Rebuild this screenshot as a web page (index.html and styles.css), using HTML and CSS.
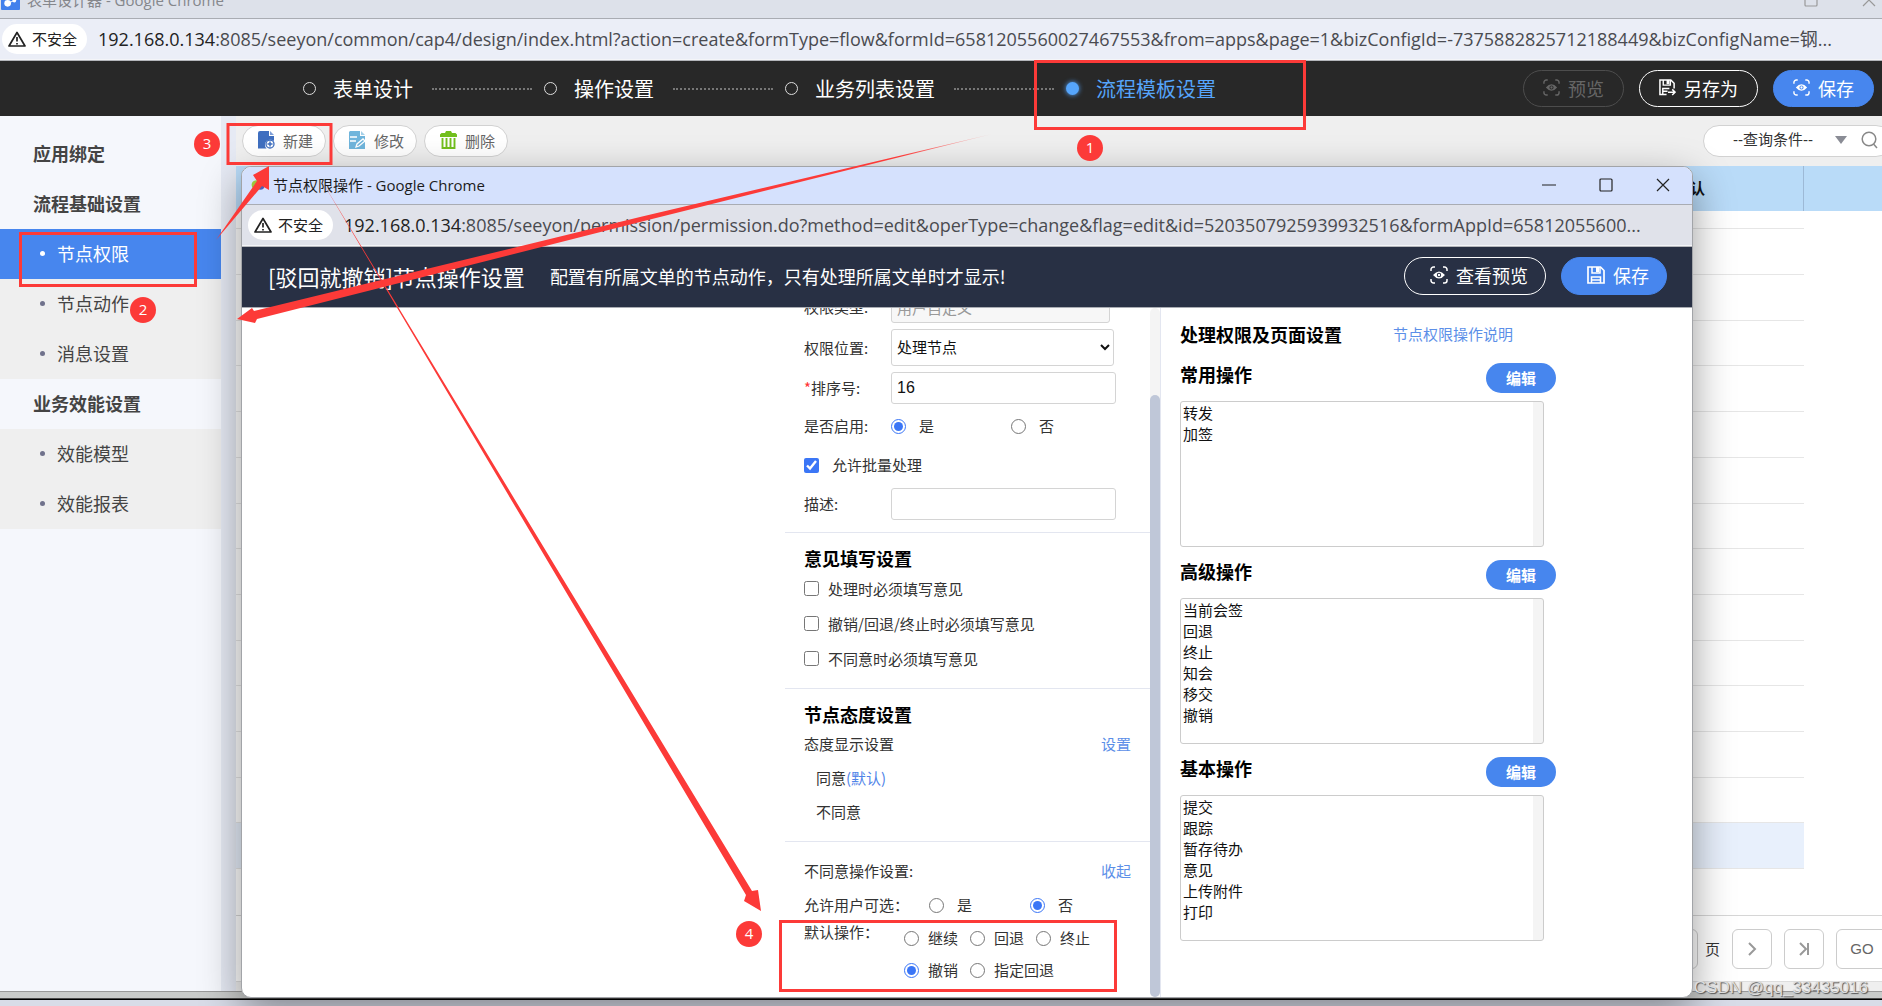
FILE: index.html
```html
<!DOCTYPE html>
<html lang="zh-CN">
<head>
  <meta charset="UTF-8" />
  <meta name="viewport" content="width=device-width, initial-scale=1.0" />
  <title>表单设计器</title>
  <link rel="stylesheet" href="styles.css">
</head>
<body>
  <!-- shared icons -->
  <svg class="defs" aria-hidden="true">
    <symbol id="i-warn" viewBox="0 0 18 16">
      <path d="M9 1.5 17 15H1z" fill="none" stroke="#222" stroke-width="1.7" stroke-linejoin="round"/>
      <path d="M9 6v4.6M9 12v1.6" stroke="#222" stroke-width="1.7"/>
    </symbol>
    <symbol id="i-eye" viewBox="0 0 18 18">
      <path d="M1 5V3.500A2.500 2.500 0 0 1 3.500 1H5M13 1h1.500A2.500 2.500 0 0 1 17 3.500V5M17 13v1.500a2.500 2.500 0 0 1-2.500 2.500H13M5 17H3.500A2.500 2.500 0 0 1 1 14.500V13" fill="none" stroke="currentColor" stroke-width="1.500"/>
      <path d="M3 9Q9 2 15 9 9 16 3 9zM9 6.800a2.200 2.200 0 1 0 0 4.400 2.200 2.200 0 0 0 0-4.400z" fill="currentColor" fill-rule="evenodd"/>
      <circle cx="9" cy="9" r="1.200" fill="currentColor"/>
    </symbol>
    <symbol id="i-save" viewBox="0 0 18 18">
      <path d="M1 1h12.500L17 4.500V17H1z" fill="none" stroke="currentColor" stroke-width="1.700"/>
      <path d="M5 1v6h8V1M4.500 17v-6h9v6M4.500 14h9" fill="none" stroke="currentColor" stroke-width="1.500"/>
      <path d="M9 1h3v5H9z" fill="currentColor"/>
    </symbol>
    <symbol id="i-saveas" viewBox="0 0 18 18">
      <path d="M8 16.500H1V1h11.500L16 4.500V10" fill="none" stroke="currentColor" stroke-width="1.600"/>
      <path d="M4.500 1v5.500h7.500V1M4 16v-6h7M4 13h5" fill="none" stroke="currentColor" stroke-width="1.500"/>
      <path d="M8 1h3v4.500H8z" fill="currentColor"/>
      <path d="M9.500 14h7M14 11l3 3-3 3" fill="none" stroke="currentColor" stroke-width="1.600"/>
    </symbol>
  </svg>

  <div class="window">
    <header class="titlebar titlebar-main">
      <svg class="app-icon" viewBox="0 0 20 20"><rect width="20" height="20" rx="1" fill="#4280ec"/><circle cx="7" cy="13" r="3.500" fill="#fff"/><circle cx="14" cy="10" r="2" fill="#fff"/><path d="M7 13l7-3" stroke="#fff"/></svg>
      <span class="title">表单设计器 - Google Chrome</span>
      <span class="win-ctl">
        <svg width="14" height="14" viewBox="0 0 14 14"><rect x="1" y="1" width="12" height="12" rx="1"/></svg>
        <svg width="14" height="14" viewBox="0 0 14 14"><path d="M1 1l12 12M13 1L1 13"/></svg>
      </span>
    </header>
    <div class="addr">
      <span class="unsafe"><svg width="18" height="16"><use href="#i-warn"/></svg>不安全</span>
      <span class="url"><b>192.168.0.134</b>:8085/seeyon/common/cap4/design/index.html?action=create&amp;formType=flow&amp;formId=6581205560027467553&amp;from=apps&amp;page=1&amp;bizConfigId=-7375882825712188449&amp;bizConfigName=钢...</span>
    </div>

    <nav class="steps">
      <ol>
        <li><i></i>表单设计</li>
        <li><i></i>操作设置</li>
        <li><i></i>业务列表设置</li>
        <li class="on"><i></i>流程模板设置</li>
      </ol>
      <div class="step-btns">
        <button class="pill ghost" disabled><svg width="17" height="17"><use href="#i-eye"/></svg>预览</button>
        <button class="pill line"><svg width="17" height="17"><use href="#i-saveas"/></svg>另存为</button>
        <button class="pill blue"><svg width="17" height="17"><use href="#i-eye"/></svg>保存</button>
      </div>
    </nav>

    <div class="main">
      <aside class="side">
        <h3>应用绑定</h3>
        <h3>流程基础设置</h3>
        <ul>
          <li><a class="on" href="#">节点权限</a></li>
          <li><a href="#">节点动作</a></li>
          <li><a href="#">消息设置</a></li>
        </ul>
        <h3>业务效能设置</h3>
        <ul>
          <li><a href="#">效能模型</a></li>
          <li><a href="#">效能报表</a></li>
        </ul>
      </aside>

      <section class="content">
        <div class="toolbar">
          <button class="tool"><svg width="17" height="18" viewBox="0 0 17 18"><path d="M2 0h9v5h5v5a5 5 0 0 0-7.500 7.500H0V2a2 2 0 0 1 2-2z" fill="#3f6fc0"/><path d="M12 0l4 4h-4z" fill="#7f9fd8"/><circle cx="12" cy="13" r="4" fill="#fff" stroke="#3f6fc0" stroke-width="1.300"/><path d="M12 10.500v5M9.500 13h5" stroke="#3f6fc0" stroke-width="1.500"/></svg>新建</button>
          <button class="tool"><svg width="17" height="18" viewBox="0 0 17 18"><path d="M1 0h10v5h5v13H0V1z" fill="#70b5dc"/><path d="M12 0l4 4h-4z" fill="#a5d0e8"/><path d="M1 6h7M1 10h6" stroke="#fff" stroke-width="1.500"/><path d="M7 16l1-3 6-5 2 2-6 5z" fill="#70b5dc" stroke="#fff" stroke-width="1.300"/></svg>修改</button>
          <button class="tool"><svg width="17" height="18" viewBox="0 0 17 18"><path d="M0 6V3.500L1.500 2H5l1-2h5l1 2h3.500L17 3.500V6z" fill="#72bf1e"/><path d="M2.500 7v10h12V7M6.500 7v10M10.500 7v10" fill="none" stroke="#72bf1e" stroke-width="1.900"/></svg>删除</button>
          <div class="search">
            <span>--查询条件--</span>
            <i class="caret"></i>
            <svg width="17" height="18" viewBox="0 0 17 18"><circle cx="8" cy="8" r="6.800"/><path d="M12.500 13l3.500 4"/></svg>
          </div>
        </div>
        <table class="list">
          <thead><tr><th></th><th class="def">是否默认</th><th class="last"></th></tr></thead>
          <tbody>
            <tr class="cut"><td colspan="2"></td><td></td></tr>
            <tr><td colspan="2"></td><td></td></tr>
            <tr><td colspan="2"></td><td></td></tr>
            <tr><td colspan="2"></td><td></td></tr>
            <tr><td colspan="2"></td><td></td></tr>
            <tr><td colspan="2"></td><td></td></tr>
            <tr><td colspan="2"></td><td></td></tr>
            <tr><td colspan="2"></td><td></td></tr>
            <tr><td colspan="2"></td><td></td></tr>
            <tr><td colspan="2"></td><td></td></tr>
            <tr><td colspan="2"></td><td></td></tr>
            <tr><td colspan="2"></td><td></td></tr>
            <tr><td colspan="2"></td><td></td></tr>
            <tr><td colspan="2"></td><td></td></tr>
            <tr class="picked"><td colspan="2"></td><td></td></tr>
            <tr class="end"><td colspan="2"></td><td></td></tr>
          </tbody>
        </table>
        <div class="pager">
          <input type="text" aria-label="页码">
          <span>页</span>
          <button aria-label="下一页"><svg width="16" height="16" viewBox="0 0 16 16"><path d="M5 2l6 6-6 6"/></svg></button>
          <button aria-label="末页"><svg width="16" height="16" viewBox="0 0 16 16"><path d="M4 2l6 6-6 6M12 2v12"/></svg></button>
          <button class="go">GO</button>
        </div>
      </section>
    </div>
  </div>
  <div class="desk"></div>

  <div class="popup">
    <header class="titlebar">
      <svg class="app-icon" viewBox="0 0 20 20"><circle cx="8" cy="10" r="6" fill="#9bc53d"/><circle cx="13" cy="11" r="5" fill="#4a62b8"/></svg>
      <span class="title">节点权限操作 - Google Chrome</span>
      <span class="win-ctl">
        <svg width="14" height="14" viewBox="0 0 14 14"><path d="M0 7h14"/></svg>
        <svg width="14" height="14" viewBox="0 0 14 14"><rect x="1" y="1" width="12" height="12" rx="1"/></svg>
        <svg width="14" height="14" viewBox="0 0 14 14"><path d="M1 1l12 12M13 1L1 13"/></svg>
      </span>
    </header>
    <div class="addr">
      <span class="unsafe"><svg width="18" height="16"><use href="#i-warn"/></svg>不安全</span>
      <span class="url"><b>192.168.0.134</b>:8085/seeyon/permission/permission.do?method=edit&amp;operType=change&amp;flag=edit&amp;id=5203507925939932516&amp;formAppId=65812055600...</span>
    </div>
    <div class="pop-head">
      <h1>[驳回就撤销]节点操作设置</h1>
      <p>配置有所属文单的节点动作，只有处理所属文单时才显示!</p>
      <button class="pill line"><svg width="18" height="18"><use href="#i-eye"/></svg>查看预览</button>
      <button class="pill blue"><svg width="18" height="18"><use href="#i-save"/></svg>保存</button>
    </div>

    <div class="pop-body">
      <form class="form">
        <div class="sec sec-base">
          <div class="row"><label for="ptype">权限类型:</label><input id="ptype" type="text" value="用户自定义" disabled></div>
          <div class="row"><label for="ppos">权限位置:</label><select id="ppos"><option>处理节点</option></select></div>
          <div class="row"><label for="psort"><em>*</em>排序号:</label><input id="psort" type="text" value="16"></div>
          <div class="row">
            <span class="lab">是否启用:</span>
            <label class="opt wide"><input type="radio" name="enable" checked>是</label>
            <label class="opt wide"><input type="radio" name="enable">否</label>
          </div>
          <div class="row batch"><label class="opt"><input type="checkbox" checked>允许批量处理</label></div>
          <div class="row"><label for="pdesc">描述:</label><input id="pdesc" type="text"></div>
        </div>
        <div class="sec">
          <h2>意见填写设置</h2>
          <div class="row check"><label class="opt"><input type="checkbox">处理时必须填写意见</label></div>
          <div class="row check"><label class="opt"><input type="checkbox">撤销/回退/终止时必须填写意见</label></div>
          <div class="row check"><label class="opt"><input type="checkbox">不同意时必须填写意见</label></div>
        </div>
        <div class="sec">
          <h2>节点态度设置</h2>
          <div class="row text">态度显示设置<a href="#">设置</a></div>
          <div class="row text sub">同意<span class="hint">(默认)</span></div>
          <div class="row text sub">不同意</div>
        </div>
        <div class="sec sec-deny">
          <div class="row text">不同意操作设置:<a href="#">收起</a></div>
          <div class="row text allow">
            <span class="lab">允许用户可选：</span>
            <label class="opt"><input type="radio" name="allow">是</label>
            <label class="opt"><input type="radio" name="allow" checked>否</label>
          </div>
          <div class="ops">
            <span class="lab">默认操作：</span>
            <div class="ops-grid">
              <label class="opt"><input type="radio" name="op">继续</label>
              <label class="opt"><input type="radio" name="op">回退</label>
              <label class="opt"><input type="radio" name="op">终止</label>
              <label class="opt"><input type="radio" name="op" checked>撤销</label>
              <label class="opt two"><input type="radio" name="op">指定回退</label>
            </div>
          </div>
        </div>
      </form>
      <div class="scroll"><i></i></div>

      <div class="perm">
        <div class="perm-title"><h2>处理权限及页面设置</h2><a href="#">节点权限操作说明</a></div>
        <div class="perm-box">
          <div class="perm-head"><h2><label for="l1">常用操作</label></h2><button type="button">编辑</button></div>
          <select id="l1" multiple><option>转发</option><option>加签</option></select>
        </div>
        <div class="perm-box">
          <div class="perm-head"><h2><label for="l2">高级操作</label></h2><button type="button">编辑</button></div>
          <select id="l2" multiple><option>当前会签</option><option>回退</option><option>终止</option><option>知会</option><option>移交</option><option>撤销</option></select>
        </div>
        <div class="perm-box">
          <div class="perm-head"><h2><label for="l3">基本操作</label></h2><button type="button">编辑</button></div>
          <select id="l3" multiple><option>提交</option><option>跟踪</option><option>暂存待办</option><option>意见</option><option>上传附件</option><option>打印</option></select>
        </div>
      </div>
    </div>
  </div>

  <!-- step marks over the windows -->
  <svg class="marks" width="1882" height="1006" viewBox="0 0 1882 1006">
    <defs>
      <linearGradient id="fade" gradientUnits="userSpaceOnUse" x1="992" y1="134" x2="900" y2="158">
        <stop offset="0" stop-color="#fc3a38" stop-opacity="0.200"/><stop offset="1" stop-color="#fc3a38"/>
      </linearGradient>
    </defs>
    <g fill="none" stroke="#fc3a38" stroke-width="3">
      <rect x="1035.500" y="61.500" width="269" height="67"/>
      <rect x="228" y="124.500" width="103" height="39"/>
      <rect x="20.500" y="233.500" width="175" height="52"/>
      <rect x="780.500" y="921.500" width="335" height="69"/>
    </g>
    <path d="M992 134L640 222 257 319 255 323 237 319 252 308 254 311 640 217z" fill="url(#fade)"/>
    <path d="M216 240L257 181 253 175 269 166 269 190 262 186z" fill="#fc3a38"/>
    <path d="M320 178L752 891 758 890 761 911 744 901 746 895z" fill="#fc3a38"/>
    <g fill="#fc3a38"><circle cx="1090" cy="148" r="13"/><circle cx="143" cy="310" r="13"/><circle cx="207" cy="144" r="13"/><circle cx="749" cy="934" r="13"/></g>
    <g class="nums"><text x="1090" y="153">1</text><text x="143" y="315">2</text><text x="207" y="149">3</text><text x="749" y="939">4</text></g>
  </svg>
  <div class="watermark">CSDN @qq_33435016</div>
</body>
</html>
```
FILE: styles.css
```css
* { box-sizing: border-box; }

body {
  margin: 0;
  height: 100vh;
  display: flex;
  flex-direction: column;
  position: relative;
  overflow: hidden;
  font-family: "Noto Sans CJK SC", sans-serif;
  font-size: 15px;
  line-height: 20px;
  color: #333;
  background: #d8dce8;
}
h1, h2, h3, p, ul, ol { margin: 0; padding: 0; }
li { list-style: none; }
a { text-decoration: none; color: #5c8fe8; }
button, input, select { font-family: inherit; font-size: 15px; }
svg { flex: none; }
.defs { position: absolute; width: 0; height: 0; }

/* browser frame */
.window {
  flex: 1;
  min-height: 0;
  display: flex;
  flex-direction: column;
  background: #fff;
  border-bottom: 1px solid #999;
}
.desk {
  height: 14px;
  background: linear-gradient(#c9cbca 6px, #999 6px, #000 7px, #000 8px, #d8dce8 8px);
}
.titlebar {
  display: flex;
  align-items: center;
  height: 38px;
  padding: 0 22px 1px 8px;
  background: #d5e1fd;
  border-bottom: 1px solid #a9acb3;
  color: #1c1c1c;
}
.titlebar .app-icon { width: 16px; height: 16px; margin-right: 7px; }
.title { flex: 1; font-family: "Open Sans", "Noto Sans CJK SC", sans-serif; }
.win-ctl { display: flex; gap: 43px; }
.win-ctl svg { fill: none; stroke: #222; stroke-width: 1.2; }
.titlebar-main {
  height: 19px;
  align-items: flex-end;
  padding: 0 6px 8px 1px;
  background: #dde1ea;
  color: #85878c;
}
.titlebar-main .app-icon { width: 19px; height: 19px; }
.titlebar-main .win-ctl svg { stroke: #999; }
.titlebar-main .win-ctl { padding-bottom: 3px; gap: 44px; }
.addr {
  display: flex;
  align-items: center;
  gap: 11px;
  height: 42px;
  padding: 0 6px 1px 2px;
  background: #ebeef7;
  border-bottom: 1px solid #b4b6bb;
  box-shadow: inset 0 -1px #f4f5f8;
}
.unsafe {
  display: flex;
  align-items: center;
  gap: 6px;
  height: 30px;
  padding: 0 10px 0 6px;
  border-radius: 15px;
  background: #fff;
  color: #222;
  white-space: nowrap;
}
.url {
  flex: 1;
  overflow: hidden;
  white-space: nowrap;
  font-family: "Open Sans", "Noto Sans CJK SC", sans-serif;
  font-size: 18px;
  line-height: 26px;
  color: #4a4b50;
}
.url b { font-weight: normal; color: #222; }

/* wizard steps */
.steps {
  display: flex;
  align-items: center;
  justify-content: space-between;
  height: 55px;
  padding: 0 8px 0 303px;
  background: #282828;
  color: #fff;
}
.steps ol { display: flex; }
.steps li { display: flex; align-items: center; font-size: 20px; line-height: 28px; white-space: nowrap; }
.steps li i { width: 13px; height: 13px; margin-right: 17px; border: 1px solid #ddd; border-radius: 50%; }
.steps li:not(:last-child)::after { content: ""; width: 100px; margin: 0 12px 0 19px; border-top: 2px dotted #777; }
.steps li.on { color: #56a5fb; }
.steps li.on i { border: 0; background: #56a5fb; box-shadow: 0 0 5px #56a5fb; }
.step-btns { display: flex; gap: 15px; }
.pill {
  display: flex;
  align-items: center;
  justify-content: center;
  gap: 8px;
  height: 37px;
  padding: 0 19px 2px;
  border: 1px solid #fff;
  border-radius: 19px;
  background: none;
  color: #fff;
  font-size: 18px;
  line-height: 24px;
  white-space: nowrap;
}
.pill.ghost { border-color: #4d4d4d; color: #666; }
.pill.blue { background: #4786ee; border-color: #4786ee; }

/* left menu */
.main { flex: 1; display: flex; min-height: 0; }
.side { width: 221px; padding-top: 13px; background: #f5f7fc; font-size: 18px; }
.side h3 { padding: 0 0 2px 33px; font-size: 18px; line-height: 48px; color: #444; }
.side ul { background: #efefef; }
.side li a { display: flex; align-items: center; height: 50px; padding: 0 0 2px 40px; color: #444; }
.side li a::before { content: ""; width: 5px; height: 5px; margin-right: 12px; border-radius: 50%; background: #70728c; }
.side li a.on { background: #4786ee; color: #fff; }
.side li a.on::before { background: #fff; }

.content { flex: 1; display: flex; flex-direction: column; border-left: 15px solid #e6eaf4; }
.toolbar {
  display: flex;
  align-items: center;
  gap: 7px;
  height: 50px;
  padding-left: 6px;
  background: #efefef;
}
.tool {
  display: flex;
  align-items: center;
  gap: 8px;
  height: 32px;
  padding: 0 12px 2px 15px;
  border: 1px solid #d2d2d2;
  border-radius: 16px;
  background: #fff;
  color: #666;
}
.search {
  display: flex;
  align-items: center;
  gap: 14px;
  height: 32px;
  margin-left: auto;
  margin-right: -10px;
  padding: 0 13px 2px 29px;
  border: 1px solid #d2d2d2;
  border-radius: 16px;
  background: #fff;
}
.search span { margin-right: 8px; font-family: "Liberation Sans", "Noto Sans CJK SC", sans-serif; }
.search svg { fill: none; stroke: #888; stroke-width: 1.5; }
.caret { border: 6px solid transparent; border-top: 8px solid #8a8c95; border-bottom: 0; }

.list { flex: 1; border-collapse: separate; border-spacing: 0; table-layout: fixed; width: 100%; }
.list th { height: 45px; padding: 0 8px 2px; background: #b9dbf8; border-right: 1px solid #9db9d6; text-align: left; color: #111; }
.list th.def { width: 167px; }
.list th.last { width: 78px; border-right: 0; }
.list td { height: 45px; padding: 0; }
.list td:first-child { border-bottom: 1px solid #e6e6e6; }
.list .cut td { height: 18px; }
.list .picked td:first-child { background: #e8f0fc; }
.list .end td { border-bottom: 0; }
.pager {
  display: flex;
  align-items: center;
  justify-content: flex-end;
  gap: 12px;
  height: 76px;
  padding-bottom: 10px;
  border-top: 1px solid #d6d6d6;
  background: linear-gradient(#fff 65px, #ccc 65px, #efefef 66px);
}
.pager button, .pager input { width: 40px; height: 40px; padding: 0; border: 1px solid #ccc; border-radius: 6px; background: #fff; }
.pager button { display: flex; align-items: center; justify-content: center; color: #666; }
.pager input { margin-right: -5px; }
.pager svg { fill: none; stroke: #999; stroke-width: 2; }
.pager .go { width: 52px; margin-right: -6px; font-family: "Liberation Sans", sans-serif; }

/* popup window */
.popup {
  position: absolute;
  top: 166px;
  right: 189px;
  bottom: 8px;
  left: 241px;
  display: flex;
  flex-direction: column;
  overflow: hidden;
  border: 1px solid #a2a4a8;
  border-radius: 10px;
  background: #fff;
  box-shadow: 0 14px 40px rgba(0, 0, 0, 0.4);
}
.popup .addr { padding-left: 6px; background: #e0e2ea; }
.pop-head {
  display: flex;
  align-items: center;
  height: 61px;
  padding: 0 25px 2px 26px;
  background: #283044;
  border-bottom: 1px solid #a9acb3;
  color: #fff;
  white-space: nowrap;
}
.pop-head h1 { font-size: 22px; font-weight: normal; line-height: 30px; }
.pop-head p { flex: 1; margin-left: 25px; font-size: 18px; }
.pop-head .pill { height: 38px; padding: 0 17px 2px 25px; margin-left: 15px; }
.pop-body { flex: 1; min-height: 0; display: flex; justify-content: flex-end; }

.form { width: 365px; overflow: hidden; }
.sec { padding: 12px 19px 12px; border-bottom: 1px solid #e3e6f0; }
.sec:last-child { border-bottom: 0; }
.sec-base { display: flex; flex-direction: column; gap: 6px; margin-top: -17px; padding-top: 0; }
.sec h2, .perm h2 { font-size: 18px; line-height: 26px; color: #000; }
.row { display: flex; align-items: center; min-height: 32px; white-space: nowrap; }
.row > label:first-child:not(.opt), .row > .lab { width: 87px; }
.row em { color: #f33; font-style: normal; }
.row.batch { min-height: 34px; }
.row.batch .opt { gap: 13px; }
.row.check { min-height: 35px; }
.row.text { min-height: 34px; }
.row.text a { margin-left: auto; }
.row.sub { padding-left: 12px; }
.hint { color: #4f83e8; }
.row input[type=text], .row select {
  width: 225px;
  height: 32px;
  padding: 0 5px;
  border: 1px solid #d4d4d4;
  border-radius: 3px;
  background: #fff;
  color: #111;
}
.row input:disabled { width: 219px; background: #f7f7f7; color: #999; }
.row select { width: 223px; height: 37px; padding: 0 1px 2px; }
#psort { font-family: "Liberation Sans", sans-serif; font-size: 16px; }
.opt { display: flex; align-items: center; gap: 9px; }
.opt input { width: 15px; height: 15px; margin: 0; accent-color: #3b76f6; }
.opt.wide { width: 120px; gap: 13px; }
.row.allow .lab { width: 125px; }
.row.allow .opt { width: 101px; gap: 13px; }
.sec-deny { padding-bottom: 0; }
.ops { display: flex; white-space: nowrap; }
.ops .lab { width: 100px; }
.ops-grid { display: grid; grid-template-columns: repeat(3, 66px); grid-auto-rows: 32px; }
.ops-grid .two { grid-column: span 2; }

.scroll { width: 10px; padding-top: 87px; background: #f4f4f4; border-radius: 5px; }
.scroll i { display: block; height: 100%; border-radius: 5px; background: #bfc7d8; }

.perm { width: 532px; padding: 13px 0 0 19px; border-left: 1px solid #e3e6f0; }
.perm-title { display: flex; align-items: center; gap: 51px; height: 26px; margin-bottom: 16px; }
.perm-box { width: 376px; margin-bottom: 13px; }
.perm-head { display: flex; justify-content: space-between; height: 38px; }
.perm .perm-head h2 { line-height: 22px; }
.perm-head button {
  width: 70px;
  height: 30px;
  padding: 0 0 2px;
  border: 0;
  border-radius: 15px;
  background: #4786ee;
  color: #fff;
  font-weight: bold;
}
.perm-box select {
  display: block;
  width: 364px;
  height: 146px;
  padding: 0;
  border: 1px solid #ccc;
  border-radius: 3px;
  overflow-y: scroll;
  outline: 0;
  background: linear-gradient(#f4f4f4, #f4f4f4) right / 10px 100% no-repeat #fff;
}
.perm-box option { min-height: 21px; padding: 0 2px; line-height: 20px; color: #111; }

.marks { position: absolute; top: 0; left: 0; pointer-events: none; }
.nums { fill: #fff; font-family: "Open Sans", sans-serif; font-size: 15px; text-anchor: middle; }
.watermark {
  position: absolute;
  right: 14px;
  bottom: 6px;
  font-family: "Liberation Sans", sans-serif;
  font-size: 17px;
  line-height: 24px;
  color: #ddd;
  text-shadow: 1px 1px 1px #555;
}
```
